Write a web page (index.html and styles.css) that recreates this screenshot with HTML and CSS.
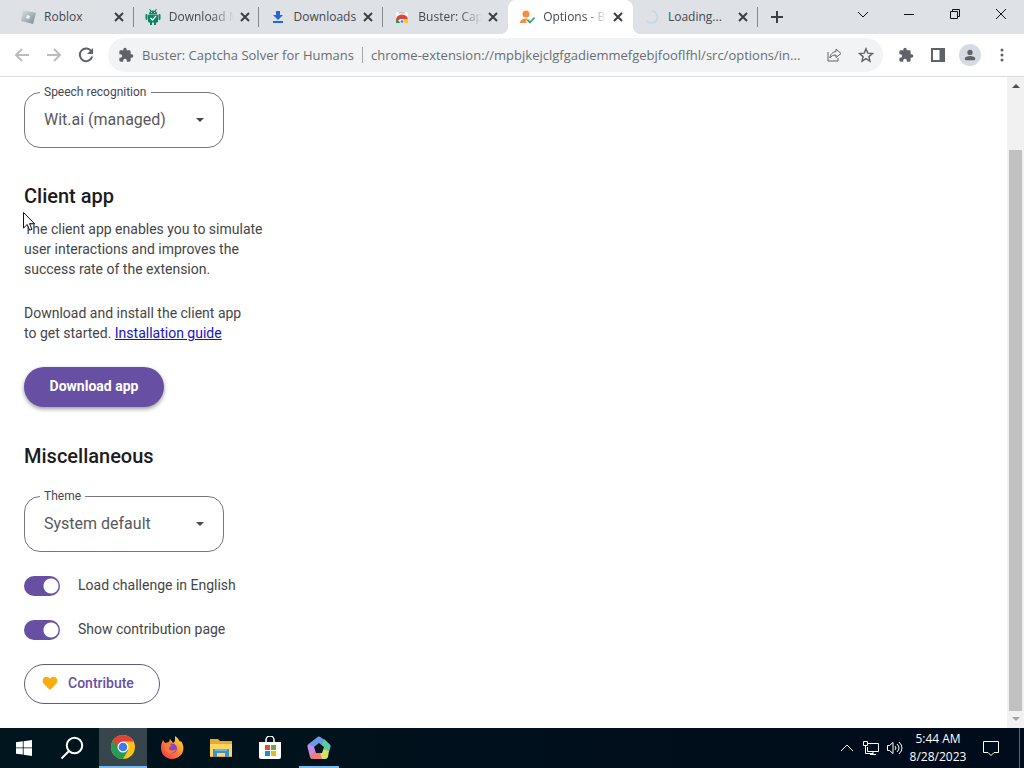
FILE: index.html
```
<!DOCTYPE html>
<html lang="en">
<head>
    <meta charset="UTF-8">
    <title>Options - Buster: Captcha Solver for Humans</title>
    <link rel="stylesheet" href="styles.css">
</head>
<body>
    <!-- Tab strip -->
    <header class="tab-strip">
        <nav class="tabs">
            <div class="tab">
                <svg class="favicon" viewBox="0 0 16 16"><defs><linearGradient id="steel" x1="0" y1="0" x2="1" y2="1"><stop offset="0" stop-color="#dce2e6"/><stop offset="1" stop-color="#7b8892"/></linearGradient></defs><path d="M3 1l13 3-3 11-12-3z" fill="url(#steel)"/><path d="M7 6l3 1-1 3-3-1z" fill="#eef2f4"/></svg>
                <span class="tab-title">Roblox</span>
                <button class="tab-close" aria-label="Close Roblox"><svg viewBox="0 0 10 10"><path d="M1 1l8 8M9 1l-8 8"/></svg></button>
            </div>
            <div class="tab">
                <svg class="favicon" viewBox="0 0 16 16" fill="#0b8561"><path d="M4 5a4 3.500 0 0 1 8 0z"/><path d="M4.500 0l2 3M11.500 0l-2 3" stroke="#0b8561"/><rect x="3" y="5.500" width="10" height="8" rx="1"/><rect x="0.500" y="5" width="2" height="6" rx="1"/><rect x="13.500" y="5" width="2" height="6" rx="1"/><path d="M5 13h2v3H5zM9 13h2v3H9z"/><path d="M5.500 9l2 2 3.500-4" fill="none" stroke="#fff" stroke-width="1.200"/><circle cx="6.500" cy="3.500" r=".5" fill="#fff"/><circle cx="9.500" cy="3.500" r=".5" fill="#fff"/></svg>
                <span class="tab-title fade">Download M</span>
                <button class="tab-close" aria-label="Close Download"><svg viewBox="0 0 10 10"><path d="M1 1l8 8M9 1l-8 8"/></svg></button>
            </div>
            <div class="tab">
                <svg class="favicon" viewBox="0 0 16 16" fill="#2367d8"><path d="M6 2h4v4h3l-5 5-5-5h3zM3 12h10v2H3z"/></svg>
                <span class="tab-title">Downloads</span>
                <button class="tab-close" aria-label="Close Downloads"><svg viewBox="0 0 10 10"><path d="M1 1l8 8M9 1l-8 8"/></svg></button>
            </div>
            <div class="tab no-line">
                <svg class="favicon" viewBox="0 0 16 16"><path d="M2 3h12v11H2z" fill="#f4f5f6"/><path d="M5 3h6v1.500H5z" fill="#c4c8cc"/><path d="M2 14v-3a6 5.500 0 0 1 12 0l-3-1H6z" fill="#db4437"/><path d="M2 14v-4l5 4z" fill="#1e9d58"/><path d="M14 14v-4h-4l-2 4z" fill="#fbc72b"/><circle cx="8" cy="12.500" r="1.800" fill="#4285f4" stroke="#fff" stroke-width=".7"/></svg>
                <span class="tab-title fade">Buster: Cap</span>
                <button class="tab-close" aria-label="Close Buster"><svg viewBox="0 0 10 10"><path d="M1 1l8 8M9 1l-8 8"/></svg></button>
            </div>
            <div class="tab active">
                <svg class="favicon" viewBox="0 0 16 16"><circle cx="7" cy="5" r="3.500" fill="#f58e3d"/><path d="M1 14c0-6 12-6 12 0z" fill="#f58e3d"/><path d="M8 11l3 3 5-6" fill="none" stroke="#fff" stroke-width="4"/><path d="M8.500 11l2.500 2.500 4.500-5" fill="none" stroke="#35a583" stroke-width="1.800"/></svg>
                <span class="tab-title fade">Options - B</span>
                <button class="tab-close" aria-label="Close Options"><svg viewBox="0 0 10 10"><path d="M1 1l8 8M9 1l-8 8"/></svg></button>
            </div>
            <div class="tab">
                <svg class="favicon" viewBox="0 0 16 16"><path d="M8 2a6 6 0 1 1-5 10" fill="none" stroke="#c6d5e4" stroke-width="1.500"/></svg>
                <span class="tab-title">Loading...</span>
                <button class="tab-close" aria-label="Close Loading"><svg viewBox="0 0 10 10"><path d="M1 1l8 8M9 1l-8 8"/></svg></button>
            </div>
        </nav>
        <button class="new-tab" aria-label="New tab"><svg viewBox="0 0 12 12"><path d="M6 0v12M0 6h12"/></svg></button>
        <div class="window-buttons">
            <button aria-label="Search tabs"><svg viewBox="0 0 12 12"><path d="M1 4l5 5 5-5"/></svg></button>
            <button aria-label="Minimize"><svg viewBox="0 0 12 12"><path d="M1 6.500h10"/></svg></button>
            <button aria-label="Restore"><svg viewBox="0 0 12 12"><path d="M1.500 3.500h7v7h-7zM3.500 3.500v-2h7v7h-2"/></svg></button>
            <button aria-label="Close window"><svg viewBox="0 0 12 12"><path d="M1 1l10 10M11 1L1 11"/></svg></button>
        </div>
    </header>

    <!-- Toolbar -->
    <div class="toolbar">
        <button class="tool dim" aria-label="Back"><svg viewBox="0 0 16 16"><path d="M15 8H2M8 2L2 8l6 6"/></svg></button>
        <button class="tool dim" aria-label="Forward"><svg viewBox="0 0 16 16"><path d="M1 8h13M8 2l6 6-6 6"/></svg></button>
        <button class="tool" aria-label="Reload"><svg viewBox="0 0 16 16"><path d="M13.500 4.500A6.300 6.300 0 1 0 14.200 9.500"/><path d="M15 1v6H9z" fill="#5f6368" stroke="none"/></svg></button>
        <div class="omnibox">
            <svg viewBox="0 0 24 24"><path d="M20.500 11H19V7a2 2 0 0 0-2-2h-4V3.500a2.500 2.500 0 0 0-5 0V5H4a2 2 0 0 0-2 2v3.800h1.500a2.700 2.700 0 0 1 0 5.400H2V20a2 2 0 0 0 2 2h3.800v-1.500a2.700 2.700 0 0 1 5.400 0V22H17a2 2 0 0 0 2-2v-4h1.500a2.500 2.500 0 0 0 0-5z"/></svg>
            <span class="site-name">Buster: Captcha Solver for Humans</span>
            <span class="url">chrome-extension://mpbjkejclgfgadiemmefgebjfooflfhl/src/options/in...</span>
            <button class="tool" aria-label="Share"><svg viewBox="0 0 16 16"><path class="thin" d="M2 5v9h10v-3M10 2l5 4.500-5 4V8C7 8 5 9 4 11c0-4 3-6 6-6.500z"/></svg></button>
            <button class="tool" aria-label="Bookmark this tab"><svg viewBox="0 0 16 16"><path d="M8 1.800l1.800 4.300 4.700.4-3.600 3.100 1.100 4.600L8 11.700l-4 2.500 1.100-4.600-3.600-3.100 4.700-.4z" stroke-width="1.400"/></svg></button>
        </div>
        <button class="tool" aria-label="Extensions"><svg class="solid" viewBox="0 0 24 24"><path d="M20.500 11H19V7a2 2 0 0 0-2-2h-4V3.500a2.500 2.500 0 0 0-5 0V5H4a2 2 0 0 0-2 2v3.800h1.500a2.700 2.700 0 0 1 0 5.400H2V20a2 2 0 0 0 2 2h3.800v-1.500a2.700 2.700 0 0 1 5.400 0V22H17a2 2 0 0 0 2-2v-4h1.500a2.500 2.500 0 0 0 0-5z"/></svg></button>
        <button class="tool" aria-label="Side panel"><svg viewBox="0 0 16 16"><path d="M2 2h12v12H2z"/><path d="M9.500 2H14v12H9.500z" fill="#5f6368" stroke="none"/></svg></button>
        <button class="tool profile" aria-label="Profile"><svg class="solid" viewBox="0 0 16 16"><circle cx="8" cy="5" r="3"/><path d="M2 14v-2c0-4 12-4 12 0v2z"/></svg></button>
        <button class="tool" aria-label="Menu"><svg class="solid" viewBox="0 0 16 16"><circle cx="8" cy="3" r="1.500"/><circle cx="8" cy="8" r="1.500"/><circle cx="8" cy="13" r="1.500"/></svg></button>
    </div>

    <!-- Options page -->
    <div class="viewport">
        <main class="options">
            <div class="field">
                <label for="speech">Speech recognition</label>
                <select id="speech">
                    <option>Wit.ai (managed)</option>
                </select>
                <svg viewBox="0 0 8 4"><path d="M0 0h8L4 4z"/></svg>
            </div>

            <section class="client-app">
                <h2>Client app</h2>
                <p>The client app enables you to simulate<br>user interactions and improves the<br>success rate of the extension.</p>
                <p>Download and install the client app<br>to get started. <a href="#">Installation guide</a></p>
                <button class="download">Download app</button>
                <svg class="cursor" viewBox="0 0 12 19"><path d="M.5.500v15.500l3.700-3.500 2.500 5.700 2.300-1-2.500-5.500h5z" fill="#fff" stroke="#111"/></svg>
            </section>

            <section>
                <h2>Miscellaneous</h2>
                <div class="field theme">
                    <label for="theme">Theme</label>
                    <select id="theme">
                        <option>System default</option>
                    </select>
                    <svg viewBox="0 0 8 4"><path d="M0 0h8L4 4z"/></svg>
                </div>
                <div class="switch">
                    <input type="checkbox" id="english" checked>
                    <label for="english">Load challenge in English</label>
                </div>
                <div class="switch">
                    <input type="checkbox" id="contribution" checked>
                    <label for="contribution">Show contribution page</label>
                </div>
                <button class="contribute">
                    <svg viewBox="0 0 16 16"><path d="M8 15L2 9C-2 4 4-1 8 3.500 12-1 18 4 14 9z"/></svg>
                    Contribute
                </button>
            </section>
        </main>
        <div class="scrollbar">
            <svg viewBox="0 0 8 4"><path d="M0 4h8L4 0z" fill="#505050"/></svg>
            <div class="thumb"></div>
            <svg viewBox="0 0 8 4"><path d="M0 0h8L4 4z" fill="#a3a3a3"/></svg>
        </div>
    </div>

    <!-- Taskbar -->
    <footer class="taskbar">
        <div class="system">
            <button aria-label="Start"><svg class="start" viewBox="0 0 16 16"><path d="M0 2.200l6.800-.9v6.200H0zM7.600 1.200L16 0v7.500H7.600zM0 8.300h6.800v6.300L0 13.700zM7.600 8.300H16V16l-8.400-1.200z" fill="#fff"/></svg></button>
            <button aria-label="Search"><svg viewBox="0 0 24 24"><circle cx="14.500" cy="9.500" r="7.700" fill="none" stroke="#fff" stroke-width="2"/><path d="M9 15l-7.500 7.500" stroke="#fff" stroke-width="2"/></svg></button>
        </div>
        <div class="apps">
            <button class="current" aria-label="Chrome"><svg viewBox="0 0 24 24"><circle cx="12" cy="12" r="12" fill="#fbc116"/><path d="M1.600 6A12 12 0 0 0 12 24l5.200-9L12 12z" fill="#249b57"/><path d="M1.600 6A12 12 0 0 1 22.600 6.500H12L7 14z" fill="#de4437"/><path d="M1.600 6l5.600 9 4 .5z" fill="#249b57"/><circle cx="12" cy="12" r="5.500" fill="#fff"/><circle cx="12" cy="12" r="4.300" fill="#3e7de9"/></svg></button>
            <button aria-label="Firefox"><svg viewBox="0 0 24 24"><defs><linearGradient id="fire" x1="1" y1="0" x2="0" y2="1"><stop offset="0" stop-color="#fff043"/><stop offset=".45" stop-color="#ff8a2a"/><stop offset="1" stop-color="#f42a5e"/></linearGradient></defs><path d="M3 4l2 3 4-1 1-3 3 4 2-2 0-5c3 2 4 4 5 6l1-1c6 9 0 18-9 18C3 23-2 14 3 4z" fill="url(#fire)"/><circle cx="12" cy="12.500" r="5" fill="#8745c8"/><path d="M5 8l4-1 3 3c-2 0-3 1-3 3 2 3 6 1 7 0-1 5-9 6-11 0z" fill="#ff7a31"/></svg></button>
            <button aria-label="File Explorer"><svg viewBox="0 0 24 24"><path d="M1 3h8l2 2h12v16H1z" fill="#eaa92d"/><path d="M1 8h22v12H1z" fill="#ffd563"/><path d="M4 21v-8h16v8h-4v-4H8v4z" fill="#3c91cb"/><path d="M6 13h12v2H6z" fill="#67b5e2"/></svg></button>
            <button aria-label="Microsoft Store"><svg viewBox="0 0 24 24"><path d="M8 7V4a4 4 0 0 1 8 0v3" fill="none" stroke="#fff" stroke-width="1.500"/><path d="M1 6h22v15a2 2 0 0 1-2 2H3a2 2 0 0 1-2-2z" fill="#fff"/><path d="M7 9h5v5H7z" fill="#d9512c"/><path d="M13 9h5v5h-5z" fill="#72a536"/><path d="M7 15h5v5H7z" fill="#238bd0"/><path d="M13 15h5v5h-5z" fill="#efb421"/></svg></button>
            <button class="running" aria-label="MEmu"><svg viewBox="0 0 24 24"><path d="M12 12L5 23a3 3 0 0 1-2-2L.500 11a3 3 0 0 1 1-3z" fill="#c58ce8"/><path d="M12 12L1 8.500 10 1.500a3 3 0 0 1 4 0l3 2z" fill="#6a9be9"/><path d="M12 12l5-9 5.500 5a3 3 0 0 1 1 3L22 16z" fill="#62c7a5"/><path d="M12 12l10 3-1 6a3 3 0 0 1-3 2h-5z" fill="#d7df62"/><path d="M12 12l3 11H6a3 3 0 0 1-3-3z" fill="#ee7c79"/><path d="M12 7l5 4-2 6H9l-2-6z" fill="#06151d"/></svg></button>
        </div>
        <div class="tray">
            <svg viewBox="0 0 16 16"><path d="M2 11l6-6 6 6"/></svg>
            <svg viewBox="0 0 16 16"><path d="M5 3.500h10.500v8H4.500V7M.500 1.500h4v4h-4zM2.500 5.500v8H10M10 11.500v3M7 14.500h6"/></svg>
            <svg viewBox="0 0 16 16"><path d="M.500 5.500h2L6 2.500v11l-3.500-3h-2zM8 6q2 2 0 4M10 4q4 4 0 8M12 2q6 6 0 12"/></svg>
            <div class="clock">
                <time>5:44 AM</time>
                <time>8/28/2023</time>
            </div>
            <svg class="notes" viewBox="0 0 16 16"><path d="M.500 1.500h15v11H11l-3 3-3-3H.500z"/></svg>
        </div>
    </footer>
</body>
</html>
```
FILE: styles.css
```
* {
    box-sizing: border-box;
}
body {
    margin: 0;
    min-height: 100vh;
    display: flex;
    flex-direction: column;
    background-color: #fff;
    font-family: Roboto, sans-serif;
    font-size: 14px;
    line-height: 20px;
    color: #454547;
}
button {
    border: none;
    background: none;
    padding: 0;
    font-family: inherit;
    font-size: 14px;
    color: inherit;
    cursor: pointer;
}
svg {
    display: block;
    flex-shrink: 0;
}

/* Tab strip */
.tab-strip {
    display: flex;
    height: 34px;
    background-color: #dee1e6;
    font-family: "Open Sans", sans-serif;
    font-size: 12px;
    color: #45484c;
}
.tabs {
    display: grid;
    grid-template-columns: repeat(6, 1fr);
    flex: 0 0 74%;
    padding-left: 9px;
}
.tab {
    display: flex;
    align-items: center;
    min-width: 0;
    padding: 0 10px 0 11px;
    background: linear-gradient(#85888d, #85888d) right center / 1px 20px no-repeat;
}
.tab.no-line {
    background: none;
}
.tab.active {
    position: relative;
    background: #fff;
    border-radius: 8px 8px 0 0;
}
/* curved feet of the selected tab */
.tab.active::before,
.tab.active::after {
    content: "";
    position: absolute;
    bottom: 0;
    width: 8px;
    height: 8px;
}
.tab.active::before {
    left: -8px;
    background: radial-gradient(circle at 0 0, transparent 8px, #fff 8px);
}
.tab.active::after {
    right: -8px;
    background: radial-gradient(circle at 100% 0, transparent 8px, #fff 8px);
}
.favicon {
    width: 16px;
    height: 16px;
    margin-right: 8px;
}
.tab-title {
    flex: 1;
    white-space: nowrap;
}
.tab-title.fade {
    -webkit-mask-image: linear-gradient(to left, transparent 6px, #000 28px);
    mask-image: linear-gradient(to left, transparent 6px, #000 28px);
}
.tab-close svg {
    width: 10px;
    height: 10px;
    stroke: #3c4043;
    stroke-width: 2;
}
.new-tab {
    width: 38px;
    display: grid;
    place-items: center;
}
.new-tab svg {
    width: 12px;
    height: 12px;
    stroke: #3c4043;
    stroke-width: 2;
}
.window-buttons {
    display: flex;
    margin-left: auto;
    height: 28px;
}
.window-buttons button {
    width: 46px;
    display: grid;
    place-items: center;
}
.window-buttons svg {
    width: 12px;
    height: 12px;
    fill: none;
    stroke: #111;
}

/* Toolbar */
.toolbar {
    display: flex;
    align-items: center;
    height: 43px;
    padding: 0 6px;
    border-bottom: 1px solid #dadce0;
    color: #5f6368;
}
.tool {
    width: 32px;
    height: 32px;
    display: grid;
    place-items: center;
}
.tool svg,
.omnibox > svg {
    width: 16px;
    height: 16px;
    fill: none;
    stroke: #5f6368;
    stroke-width: 2;
}
.tool svg .thin {
    stroke-width: 1;
}
.tool svg.solid,
.omnibox > svg {
    fill: #5f6368;
    stroke: none;
}
.tool.dim svg {
    stroke: #babcbe;
}
.omnibox {
    display: flex;
    align-items: center;
    flex: 1;
    min-width: 0;
    height: 34px;
    margin: 0 7px 0 6px;
    padding: 0 1px 0 10px;
    border-radius: 17px;
    background-color: #f1f3f4;
    font-family: "Open Sans", sans-serif;
    font-size: 13px;
    white-space: nowrap;
    color: #6a6e73;
}
.site-name {
    margin-left: 8px;
    padding-right: 8px;
    border-right: 1px solid #a5a8ab;
    line-height: 16px;
}
.url {
    flex: 1;
    min-width: 0;
    padding-left: 8px;
    overflow: hidden;
    text-overflow: ellipsis;
}
.profile svg {
    width: 22px;
    height: 22px;
    padding: 4px;
    border-radius: 50%;
    background-color: #d5dae3;
}

/* Options page */
.viewport {
    flex: 1;
    display: flex;
}
.options {
    flex: 1;
    padding: 15px 24px 24px;
}
.options h2 {
    margin: 0;
    font-size: 20px;
    line-height: 32px;
    font-weight: 500;
    color: #1d1b20;
}
.options p {
    margin: 0 0 24px;
}
.options h2 + p {
    margin-top: 7px;
}
.options a {
    color: #1a12c4;
}
.field {
    position: relative;
    width: 200px;
    margin-bottom: 32px;
}
.field.theme {
    margin: 24px 0;
}
.field label {
    position: absolute;
    top: -8px;
    left: 16px;
    padding: 0 4px;
    background-color: #fff;
    font-size: 12px;
    line-height: 16px;
    color: #49454f;
}
.field select {
    display: block;
    width: 100%;
    height: 56px;
    padding: 0 40px 2px 19px;
    border: 1px solid #79747e;
    border-radius: 16px;
    background-color: #fff;
    appearance: none;
    font-family: inherit;
    font-size: 16px;
    color: #5a585c;
}
.field svg {
    position: absolute;
    top: 26px;
    right: 20px;
    width: 8px;
    height: 4px;
    fill: #49454f;
}
.client-app {
    position: relative;
    margin-bottom: 33px;
}
.cursor {
    position: absolute;
    top: 32px;
    left: -1px;
    width: 12px;
    height: 19px;
}
.download {
    height: 40px;
    min-width: 140px;
    padding: 0 24px 2px;
    border-radius: 20px;
    background-color: #6750a4;
    box-shadow: 0 2px 4px rgba(0,0,0,0.4);
    font-weight: 700;
    color: #fff;
}
.switch {
    display: flex;
    align-items: center;
    gap: 18px;
    height: 20px;
    margin-bottom: 24px;
}
.switch input {
    appearance: none;
    width: 36px;
    height: 20px;
    margin: 0;
    border-radius: 10px;
    background: radial-gradient(circle at 27px 10px, #fff 7px, #6750a4 8px);
}
.switch label {
    padding-bottom: 2px;
}
.contribute {
    display: flex;
    align-items: center;
    gap: 10px;
    height: 40px;
    min-width: 136px;
    padding: 0 24px 2px 17px;
    border: 1px solid #625b80;
    border-radius: 20px;
    font-weight: 500;
    color: #6750a4;
}
.contribute svg {
    width: 16px;
    height: 16px;
    fill: #f9ab12;
}
.scrollbar {
    display: flex;
    flex-direction: column;
    align-items: center;
    width: 17px;
    padding: 7px 2px;
    background-color: #f1f1f1;
}
.scrollbar svg {
    width: 8px;
    height: 4px;
}
.thumb {
    flex: 1;
    width: 13px;
    margin: 62px 0 6px;
    background-color: #c1c1c1;
}

/* Taskbar */
.taskbar {
    display: flex;
    height: 40px;
    background: linear-gradient(to right, #00151d, #000b1b);
    color: #fff;
}
.system,
.apps,
.tray {
    display: flex;
}
.apps {
    gap: 1px;
    margin-left: 3px;
}
.taskbar button {
    width: 48px;
    height: 40px;
    display: grid;
    place-items: center;
}
.taskbar button svg {
    width: 24px;
    height: 24px;
}
.taskbar button .start {
    width: 16px;
    height: 16px;
}
.taskbar .current {
    background-color: #37464d;
    border-bottom: 2px solid #76b9ed;
}
.taskbar .running {
    background: linear-gradient(#76b9ed, #76b9ed) center bottom / 40px 2px no-repeat;
}
.tray {
    align-items: center;
    gap: 8px;
    margin-left: auto;
    margin-right: 4px;
    padding-right: 20px;
    border-right: 1px solid #5a636c;
}
.tray svg {
    width: 16px;
    height: 16px;
    fill: none;
    stroke: #fff;
}
.clock {
    width: 54px;
    display: flex;
    flex-direction: column;
    align-items: center;
    font-family: "Open Sans", sans-serif;
    font-size: 12px;
    line-height: 18px;
    white-space: nowrap;
}
.tray .notes {
    margin-left: 10px;
}
```
